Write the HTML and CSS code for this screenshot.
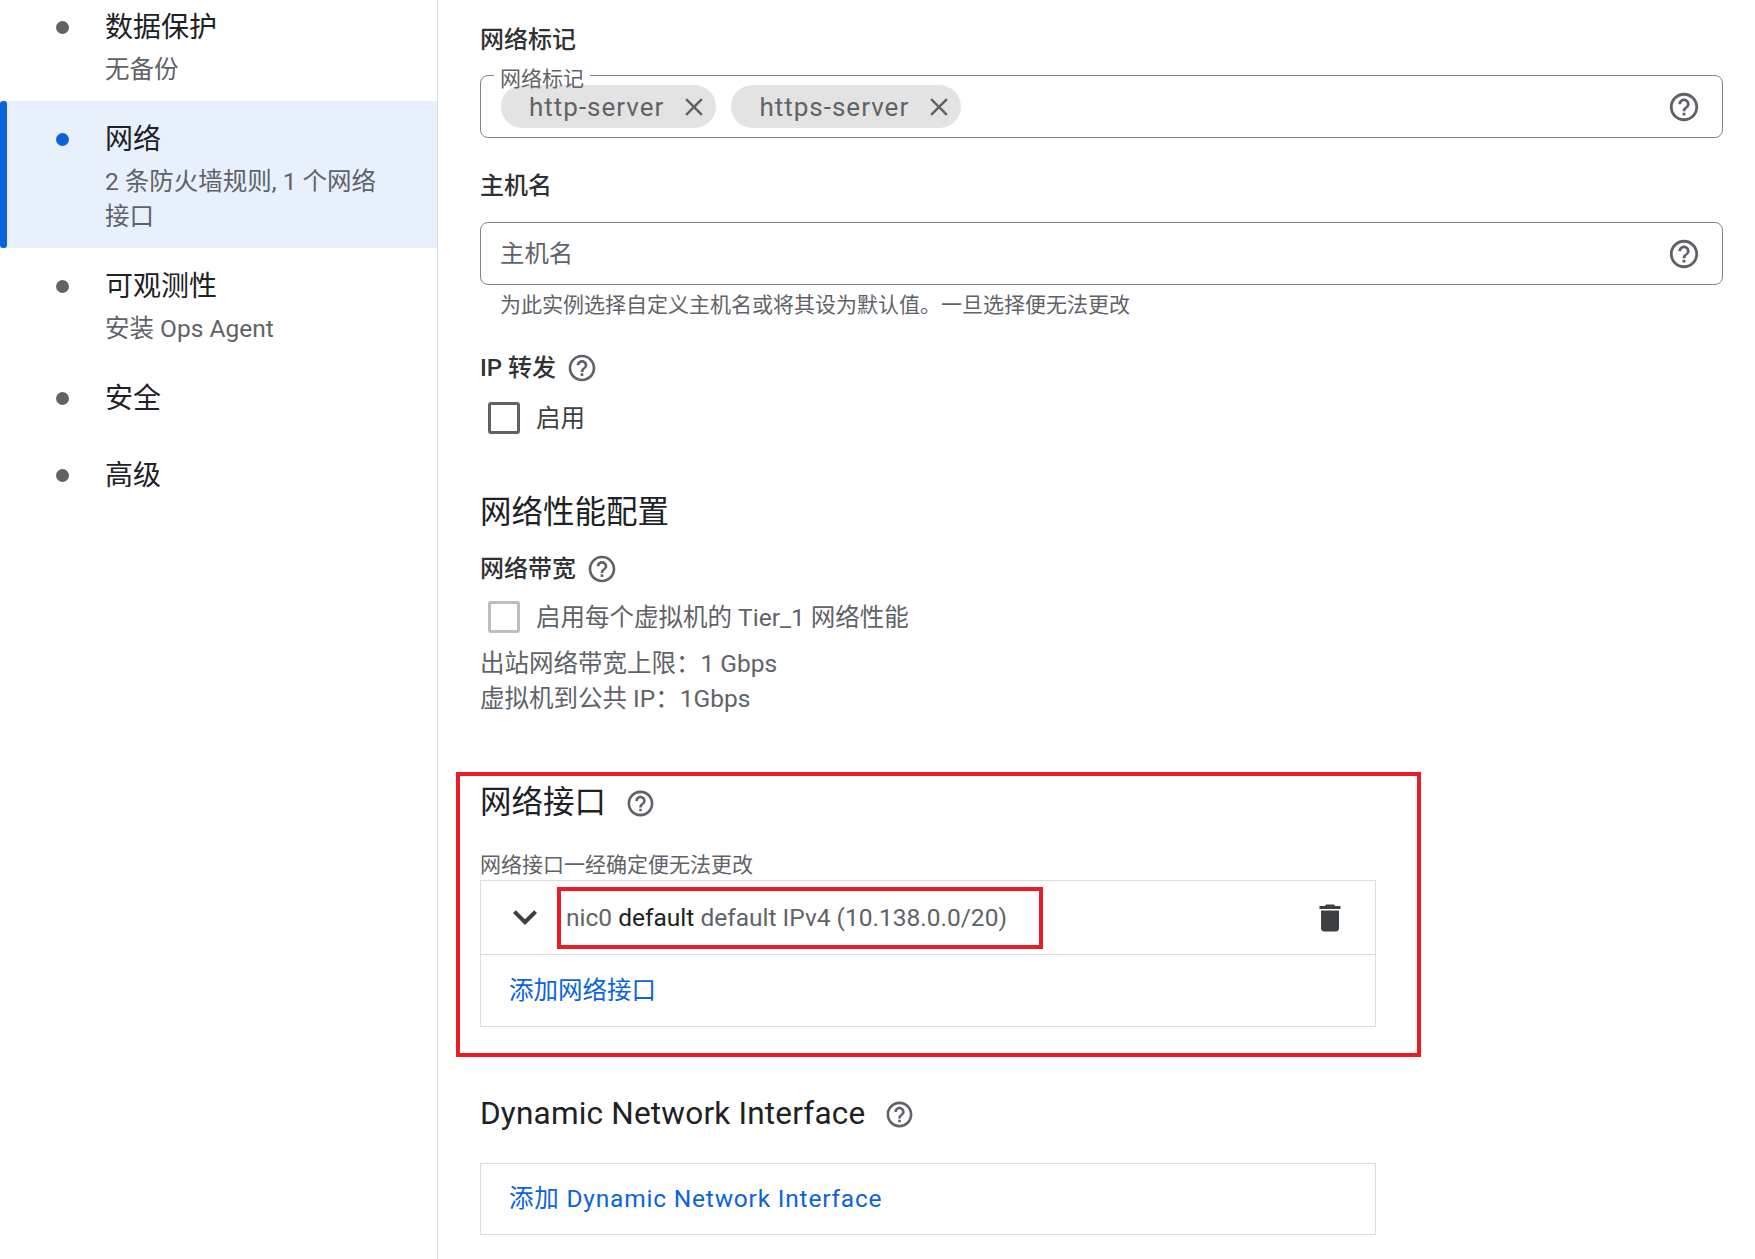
FILE: index.html
```html
<!DOCTYPE html>
<html lang="zh-CN">
<head>
<meta charset="utf-8">
<title>网络</title>
<link rel="stylesheet" href="styles.css">
</head>
<body>
<svg class="defs" aria-hidden="true">
  <symbol id="help" viewBox="0 0 24 24"><path d="M11 18h2v-2h-2v2zm1-16C6.48 2 2 6.48 2 12s4.48 10 10 10 10-4.48 10-10S17.52 2 12 2zm0 18c-4.41 0-8-3.59-8-8s3.59-8 8-8 8 3.59 8 8-3.59 8-8 8zm0-14c-2.21 0-4 1.79-4 4h2c0-1.1.9-2 2-2s2 .9 2 2c0 2-3 1.75-3 5h2c0-2.25 3-2.5 3-5 0-2.21-1.79-4-4-4z"/></symbol>
  <symbol id="close" viewBox="0 0 24 24"><path d="M19 6.41 17.59 5 12 10.59 6.41 5 5 6.41 10.59 12 5 17.59 6.41 19 12 13.41 17.59 19 19 17.59 13.41 12z"/></symbol>
  <symbol id="trash" viewBox="0 0 24 24"><path d="M6 19c0 1.1.9 2 2 2h8c1.1 0 2-.9 2-2V7H6v12zM19 4h-3.5l-1-1h-5l-1 1H5v2h14V4z"/></symbol>
  <symbol id="chevron" viewBox="0 0 24 24"><path d="M16.59 8.59 12 13.17 7.41 8.59 6 10l6 6 6-6z"/></symbol>
</svg>
<div class="page">
  <nav class="sidebar">
    <ul class="steps">
      <li class="step"><span class="dot"></span><div><div class="step-title">数据保护</div><div class="step-sub">无备份</div></div></li>
      <li class="step active"><span class="dot"></span><div><div class="step-title">网络</div><div class="step-sub">2 条防火墙规则, 1 个网络<br>接口</div></div></li>
      <li class="step"><span class="dot"></span><div><div class="step-title">可观测性</div><div class="step-sub">安装 Ops Agent</div></div></li>
      <li class="step"><span class="dot"></span><div><div class="step-title">安全</div></div></li>
      <li class="step"><span class="dot"></span><div><div class="step-title">高级</div></div></li>
    </ul>
  </nav>
  <main class="main">
    <h3 class="label">网络标记</h3>
    <div class="field field-tags">
      <span class="legend">网络标记</span>
      <span class="chip">http-server<svg class="chip-x"><use href="#close"/></svg></span>
      <span class="chip">https-server<svg class="chip-x"><use href="#close"/></svg></span>
      <svg class="help field-help"><use href="#help"/></svg>
    </div>
    <h3 class="label label-host">主机名</h3>
    <div class="field field-host">
      <span class="placeholder">主机名</span>
      <svg class="help field-help"><use href="#help"/></svg>
    </div>
    <p class="hint">为此实例选择自定义主机名或将其设为默认值。一旦选择便无法更改</p>
    <h3 class="label label-row label-ip">IP 转发<svg class="help"><use href="#help"/></svg></h3>
    <label class="check check-ip"><span class="box"></span><span class="check-text">启用</span></label>
    <h2 class="title title-perf">网络性能配置</h2>
    <h3 class="label label-row label-band">网络带宽<svg class="help"><use href="#help"/></svg></h3>
    <label class="check check-band disabled"><span class="box"></span><span class="check-text">启用每个虚拟机的 Tier_1 网络性能</span></label>
    <div class="stats">
      <div>出站网络带宽上限：1 Gbps</div>
      <div>虚拟机到公共 IP：1Gbps</div>
    </div>
    <section class="nic">
      <span class="mark mark-outer"></span>
      <h2 class="title title-row">网络接口<svg class="help title-help"><use href="#help"/></svg></h2>
      <p class="note">网络接口一经确定便无法更改</p>
      <div class="panel">
        <div class="nic-row">
          <svg class="chevron"><use href="#chevron"/></svg>
          <span class="nic-text">nic0 <b>default</b> default IPv4 (10.138.0.0/20)</span>
          <svg class="trash"><use href="#trash"/></svg>
          <span class="mark mark-inner"></span>
        </div>
        <div class="add-row"><a class="link">添加网络接口</a></div>
      </div>
    </section>
    <h2 class="title title-row title-dyn">Dynamic Network Interface<svg class="help title-help dyn-help"><use href="#help"/></svg></h2>
    <div class="panel panel-dyn"><div class="add-row add-dyn"><a class="link link-dyn">添加 Dynamic Network Interface</a></div></div>
  </main>
</div>
</body>
</html>
```
FILE: styles.css
```css
* { box-sizing: border-box; }
html, body { margin: 0; height: 100%; overflow: hidden; background: #fff; }
body { font-family: Roboto, "Noto Sans CJK SC", sans-serif; color: #202124; }
.defs { display: none; }
h2, h3, p, ul { margin: 0; padding: 0; }
.page { display: grid; grid-template-columns: 438px 1fr; height: 1259px; }

.sidebar { border-right: 1.5px solid #dadce0; overflow: hidden; }
.steps { list-style: none; margin-top: -11px; }
.step { display: flex; min-height: 77px; padding: 20px 0 14px 56px; position: relative; }
.dot { width: 13px; height: 13px; border-radius: 50%; background: #5f6368; margin-top: 12px; margin-right: 36px; flex: none; }
.step-title { font-size: 28px; line-height: 38px; }
.step-sub { font-size: 24.5px; line-height: 35px; margin-top: 5px; color: #5f6368; }
.active { background: #e8f0fc; }
.active::before { content: ""; position: absolute; left: 0; top: 0; bottom: 0; width: 7px; border-radius: 3px; background: #0b63dc; }
.active .dot { background: #0b63dc; }

.main { padding: 22px 32px 0 42px; min-width: 0; }
.label { font-size: 24px; line-height: 36px; font-weight: 500; color: #303134; }
.label-row { display: flex; align-items: center; }
.label-row .help { margin-left: 10px; width: 32px; height: 32px; }
.label-host { margin-top: 30px; }
.label-ip { margin-top: 30px; }
.label-band { margin-top: 17px; }
.help { width: 31px; height: 31px; fill: #5f6368; flex: none; }

.field { position: relative; display: flex; align-items: center; height: 63px; margin-top: 17px; padding: 0 20px; border: 1.5px solid #80868b; border-radius: 8px; }
.field-host { margin-top: 18px; }
.field .field-help { margin-left: auto; margin-right: 1px; width: 34px; height: 34px; }
.legend { position: absolute; left: 13px; top: -9px; padding: 0 6px; background: linear-gradient(#fff 45%, transparent 45%); font-size: 21px; line-height: 24px; color: #5f6368; }
.chip { display: inline-flex; align-items: center; height: 43px; margin-right: 15px; padding: 0 7px 0 28px; border-radius: 22px; background: #e3e3e3; font-size: 26px; letter-spacing: 1px; color: #5f6368; }
.chip-x { width: 30px; height: 30px; fill: #5f6368; margin-left: 15px; }
.placeholder { margin-left: -1px; margin-bottom: 4px; font-size: 24.4px; color: #5f6368; }
.hint { margin-top: 5px; padding-left: 20px; font-size: 21px; line-height: 30px; color: #5f6368; }

.check { display: flex; align-items: center; height: 36px; padding-left: 8px; font-size: 24.5px; color: #3c4043; }
.check-text { padding-bottom: 4px; }
.box { width: 32px; height: 32px; margin-right: 16px; border: 3px solid #5f6368; border-radius: 3px; flex: none; }
.check-ip { margin-top: 14px; }
.check-band { margin-top: 12px; }
.disabled { color: #5f6368; }
.disabled .box { border-color: #bdbdbd; }

.title { height: 44px; padding-top: 2px; font-size: 31.5px; line-height: 42px; font-weight: 400; }
.title-row { display: flex; align-items: center; }
.title-perf { margin-top: 54px; }
.title-help { margin-left: 19px; }
.title-dyn { margin-top: 64px; letter-spacing: .2px; }

.stats { margin-top: 11px; font-size: 24.5px; line-height: 35px; color: #5f6368; }
.nic { position: relative; margin-top: 64px; }
.note { margin-top: 26px; font-size: 21px; line-height: 30px; color: #5f6368; }
.panel { width: 896px; border: 1.5px solid #dadce0; }
.nic-row { position: relative; display: flex; align-items: center; height: 74px; padding-left: 20px; border-bottom: 1.5px solid #dadce0; }
.chevron { width: 48px; height: 48px; margin-bottom: 2px; fill: #3c4043; flex: none; }
.nic-text { margin-left: 17px; font-size: 24.5px; color: #5f6368; }
.nic-text b { font-weight: 400; color: #202124; }
.trash { width: 36px; height: 36px; fill: #3c4043; margin-left: auto; margin-right: 27px; }
.add-row { display: flex; align-items: center; height: 71px; padding: 0 0 4px 28px; }
.add-dyn { height: 70px; padding-bottom: 5px; }
.link { font-size: 24.5px; color: #0b63dc; }
.link-dyn { letter-spacing: .8px; }
.panel-dyn { margin-top: 28px; }

.mark { position: absolute; border: 4px solid #ed1c24; pointer-events: none; }
.mark-outer { left: -24px; top: -8px; width: 965px; height: 285px; }
.mark-inner { left: 76px; top: 6px; width: 486px; height: 62px; }
```
